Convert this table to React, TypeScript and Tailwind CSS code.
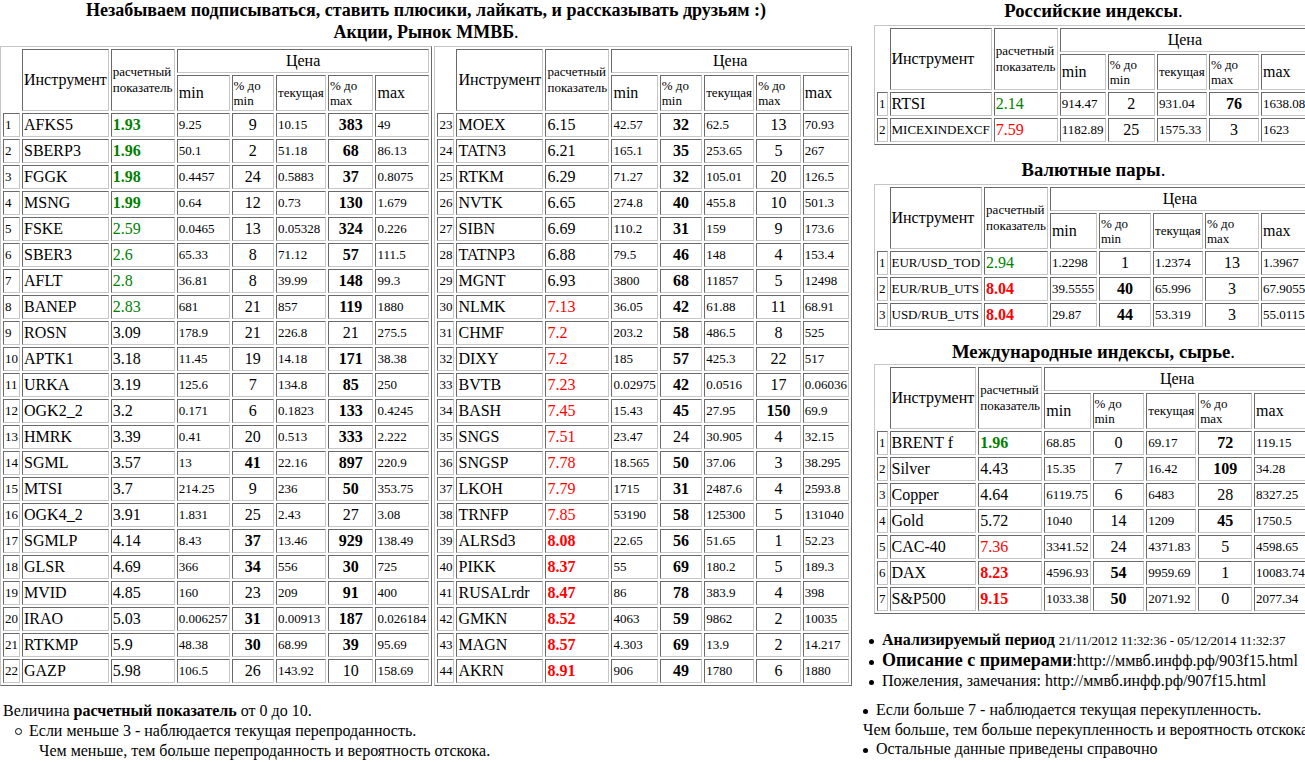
import React from 'react';

// ============================================================
// MMVB indicator tables — two stock tables plus index / FX / commodity blocks.
// ============================================================

type Row = [number, string, string, string, number, string, number, string];

const LEFT: Row[] = [
  [1, 'AFKS5', '1.93', '9.25', 9, '10.15', 383, '49'],
  [2, 'SBERP3', '1.96', '50.1', 2, '51.18', 68, '86.13'],
  [3, 'FGGK', '1.98', '0.4457', 24, '0.5883', 37, '0.8075'],
  [4, 'MSNG', '1.99', '0.64', 12, '0.73', 130, '1.679'],
  [5, 'FSKE', '2.59', '0.0465', 13, '0.05328', 324, '0.226'],
  [6, 'SBER3', '2.6', '65.33', 8, '71.12', 57, '111.5'],
  [7, 'AFLT', '2.8', '36.81', 8, '39.99', 148, '99.3'],
  [8, 'BANEP', '2.83', '681', 21, '857', 119, '1880'],
  [9, 'ROSN', '3.09', '178.9', 21, '226.8', 21, '275.5'],
  [10, 'APTK1', '3.18', '11.45', 19, '14.18', 171, '38.38'],
  [11, 'URKA', '3.19', '125.6', 7, '134.8', 85, '250'],
  [12, 'OGK2_2', '3.2', '0.171', 6, '0.1823', 133, '0.4245'],
  [13, 'HMRK', '3.39', '0.41', 20, '0.513', 333, '2.222'],
  [14, 'SGML', '3.57', '13', 41, '22.16', 897, '220.9'],
  [15, 'MTSI', '3.7', '214.25', 9, '236', 50, '353.75'],
  [16, 'OGK4_2', '3.91', '1.831', 25, '2.43', 27, '3.08'],
  [17, 'SGMLP', '4.14', '8.43', 37, '13.46', 929, '138.49'],
  [18, 'GLSR', '4.69', '366', 34, '556', 30, '725'],
  [19, 'MVID', '4.85', '160', 23, '209', 91, '400'],
  [20, 'IRAO', '5.03', '0.006257', 31, '0.00913', 187, '0.026184'],
  [21, 'RTKMP', '5.9', '48.38', 30, '68.99', 39, '95.69'],
  [22, 'GAZP', '5.98', '106.5', 26, '143.92', 10, '158.69'],
];

const RIGHT: Row[] = [
  [23, 'MOEX', '6.15', '42.57', 32, '62.5', 13, '70.93'],
  [24, 'TATN3', '6.21', '165.1', 35, '253.65', 5, '267'],
  [25, 'RTKM', '6.29', '71.27', 32, '105.01', 20, '126.5'],
  [26, 'NVTK', '6.65', '274.8', 40, '455.8', 10, '501.3'],
  [27, 'SIBN', '6.69', '110.2', 31, '159', 9, '173.6'],
  [28, 'TATNP3', '6.88', '79.5', 46, '148', 4, '153.4'],
  [29, 'MGNT', '6.93', '3800', 68, '11857', 5, '12498'],
  [30, 'NLMK', '7.13', '36.05', 42, '61.88', 11, '68.91'],
  [31, 'CHMF', '7.2', '203.2', 58, '486.5', 8, '525'],
  [32, 'DIXY', '7.2', '185', 57, '425.3', 22, '517'],
  [33, 'BVTB', '7.23', '0.02975', 42, '0.0516', 17, '0.06036'],
  [34, 'BASH', '7.45', '15.43', 45, '27.95', 150, '69.9'],
  [35, 'SNGS', '7.51', '23.47', 24, '30.905', 4, '32.15'],
  [36, 'SNGSP', '7.78', '18.565', 50, '37.06', 3, '38.295'],
  [37, 'LKOH', '7.79', '1715', 31, '2487.6', 4, '2593.8'],
  [38, 'TRNFP', '7.85', '53190', 58, '125300', 5, '131040'],
  [39, 'ALRSd3', '8.08', '22.65', 56, '51.65', 1, '52.23'],
  [40, 'PIKK', '8.37', '55', 69, '180.2', 5, '189.3'],
  [41, 'RUSALrdr', '8.47', '86', 78, '383.9', 4, '398'],
  [42, 'GMKN', '8.52', '4063', 59, '9862', 2, '10035'],
  [43, 'MAGN', '8.57', '4.303', 69, '13.9', 2, '14.217'],
  [44, 'AKRN', '8.91', '906', 49, '1780', 6, '1880'],
];

const RU: Row[] = [
  [1, 'RTSI', '2.14', '914.47', 2, '931.04', 76, '1638.08'],
  [2, 'MICEXINDEXCF', '7.59', '1182.89', 25, '1575.33', 3, '1623'],
];

const FX: Row[] = [
  [1, 'EUR/USD_TOD', '2.94', '1.2298', 1, '1.2374', 13, '1.3967'],
  [2, 'EUR/RUB_UTS', '8.04', '39.5555', 40, '65.996', 3, '67.9055'],
  [3, 'USD/RUB_UTS', '8.04', '29.87', 44, '53.319', 3, '55.0115'],
];

const WORLD: Row[] = [
  [1, 'BRENT f', '1.96', '68.85', 0, '69.17', 72, '119.15'],
  [2, 'Silver', '4.43', '15.35', 7, '16.42', 109, '34.28'],
  [3, 'Copper', '4.64', '6119.75', 6, '6483', 28, '8327.25'],
  [4, 'Gold', '5.72', '1040', 14, '1209', 45, '1750.5'],
  [5, 'CAC-40', '7.36', '3341.52', 24, '4371.83', 5, '4598.65'],
  [6, 'DAX', '8.23', '4596.93', 54, '9959.69', 1, '10083.74'],
  [7, 'S&P500', '9.15', '1033.38', 50, '2071.92', 0, '2077.34'],
];

// column widths (border-box) per table
const W_LEFT = ['w-[17px]', 'w-[86px]', 'w-[64px]', 'w-[52px]', 'w-[43px]', 'w-[50px]', 'w-[46px]', 'w-[54px]'];
const W_RIGHT = ['w-[17px]', 'w-[87px]', 'w-[64px]', 'w-[46px]', 'w-[43px]', 'w-[50px]', 'w-[45px]', 'w-[46px]'];
const W_RU = ['w-[10px]', 'w-[101px]', 'w-[64px]', 'w-[46px]', 'w-[48px]', 'w-[50px]', 'w-[51px]', 'w-[49px]'];
const W_FX = ['w-[10px]', 'w-[92px]', 'w-[63px]', 'w-[47px]', 'w-[53px]', 'w-[50px]', 'w-[55px]', 'w-[49px]'];
const W_WORLD = ['w-[10px]', 'w-[86px]', 'w-[64px]', 'w-[46px]', 'w-[53px]', 'w-[49px]', 'w-[55px]', 'w-[56px]'];

const CELL =
  'p-[1px] border border-solid border-t-[#6a6a6a] border-l-[#6a6a6a] border-b-[#c6c6c6] border-r-[#c6c6c6]';

function calcClass(v: string) {
  const n = parseFloat(v);
  if (n < 2) return 'text-[#008000] font-bold';
  if (n < 3) return 'text-[#008000]';
  if (n > 8) return 'text-[#ff0000] font-bold';
  if (n > 7) return 'text-[#ff0000]';
  return '';
}

function DataTable({ rows, w }: { rows: Row[]; w: string[] }) {
  return (
    <table className="border-separate border-spacing-[2px] border border-solid border-t-[#c6c6c6] border-l-[#c6c6c6] border-b-[#6a6a6a] border-r-[#6a6a6a] leading-[18px]">
      <tbody>
        <tr className="h-[24px]">
          <td rowSpan={2} className={`p-0 ${w[0]}`} />
          <td rowSpan={2} className={`${CELL} ${w[1]} text-[16px]`}>
            Инструмент
          </td>
          <td rowSpan={2} className={`${CELL} ${w[2]} text-[13px] leading-[16px]`}>
            расчетный
            <br />
            показатель
          </td>
          <td colSpan={5} className={`${CELL} text-center text-[16px]`}>
            Цена
          </td>
        </tr>
        <tr className="h-[36px]">
          <td className={`${CELL} ${w[3]} text-[16px]`}>min</td>
          <td className={`${CELL} ${w[4]} text-[13px] leading-[15px]`}>
            % до
            <br />
            min
          </td>
          <td className={`${CELL} ${w[5]} text-[13px]`}>текущая</td>
          <td className={`${CELL} ${w[6]} text-[13px] leading-[15px]`}>
            % до
            <br />
            max
          </td>
          <td className={`${CELL} ${w[7]} text-[16px]`}>max</td>
        </tr>
        {rows.map((r) => (
          <tr key={r[0]} className="h-[24px]">
            <td className={`${CELL} text-[13px]`}>{r[0]}</td>
            <td className={`${CELL} whitespace-nowrap ${r[1].length > 9 ? 'text-[13px]' : 'text-[16px]'}`}>{r[1]}</td>
            <td className={`${CELL} text-[16px] ${calcClass(r[2])}`}>{r[2]}</td>
            <td className={`${CELL} text-[13px]`}>{r[3]}</td>
            <td className={`${CELL} text-center text-[16px] ${r[4] >= 30 ? 'font-bold' : ''}`}>{r[4]}</td>
            <td className={`${CELL} text-[13px]`}>{r[5]}</td>
            <td className={`${CELL} text-center text-[16px] ${r[6] >= 30 ? 'font-bold' : ''}`}>{r[6]}</td>
            <td className={`${CELL} text-[13px]`}>{r[7]}</td>
          </tr>
        ))}
      </tbody>
    </table>
  );
}

function Heading({ children, className = '' }: { children: React.ReactNode; className?: string }) {
  return (
    <div className={`text-center text-[18.7px] leading-[22px] ${className}`}>
      <b>{children}</b>.
    </div>
  );
}

const Dot = () => <span className="mr-[8px] inline-block h-[5px] w-[5px] rounded-full bg-black align-middle" />;

export default function App() {
  return (
    <div className="relative h-[762px] w-[1305px] overflow-hidden bg-white font-['Liberation_Serif',serif] text-black">
      <div className="flex h-[691px] items-start">
        {/* stocks */}
        <div className="w-[852px] shrink-0">
          <div className="text-center text-[18px] font-bold leading-[20px]">
            Незабываем подписываться, ставить плюсики, лайкать, и рассказывать друзьям :)
          </div>
          <div className="mt-[2px] text-center text-[18px] leading-[20px]">
            <b>Акции, Рынок ММВБ</b>.
          </div>
          <div className="mt-[4px] flex gap-[2px]">
            <DataTable rows={LEFT} w={W_LEFT} />
            <DataTable rows={RIGHT} w={W_RIGHT} />
          </div>
        </div>

        {/* indices */}
        <div className="ml-[22px] w-[439px] shrink-0">
          <Heading>Российские индексы</Heading>
          <div className="mt-[3px]">
            <DataTable rows={RU} w={W_RU} />
          </div>
          <Heading className="mt-[14px]">Валютные пары</Heading>
          <div className="mt-[3px]">
            <DataTable rows={FX} w={W_FX} />
          </div>
          <Heading className="mt-[11px]">Международные индексы, сырье</Heading>
          <div className="mt-[1px]">
            <DataTable rows={WORLD} w={W_WORLD} />
          </div>
          <div className="ml-[-5px] mt-[16px] whitespace-nowrap">
            <div className="h-[20px] leading-[20px]">
              <Dot />
              <b className="text-[16px]">Анализируемый период</b>{' '}
              <span className="text-[13px]">21/11/2012 11:32:36 - 05/12/2014 11:32:37</span>
            </div>
            <div className="h-[21px] leading-[21px]">
              <Dot />
              <b className="text-[18px]">Описание с примерами</b>
              <span className="text-[16px]">:http://ммвб.инфф.рф/903f15.html</span>
            </div>
            <div className="h-[20px] text-[16px] leading-[20px]">
              <Dot />
              Пожеления, замечания: http://ммвб.инфф.рф/907f15.html
            </div>
          </div>
        </div>
      </div>

      {/* legend */}
      <div className="mt-[9px] flex whitespace-nowrap text-[16px]">
        <div className="w-[863px] shrink-0 pl-[3px]">
          <div className="leading-[21px]">
            Величина <b>расчетный показатель</b> от 0 до 10.
          </div>
          <div className="flex items-center pl-[12px] leading-[20px]">
            <span className="mr-[7px] inline-block h-[7px] w-[7px] rounded-full border border-black" />
            Если меньше 3 - наблюдается текущая перепроданность.
          </div>
          <div className="pl-[36px] leading-[19px]">Чем меньше, тем больше перепроданность и вероятность отскока.</div>
        </div>
        <div className="shrink-0">
          <div className="leading-[20px]">
            <Dot />
            Если больше 7 - наблюдается текущая перекупленность.
          </div>
          <div className="leading-[19px]">Чем больше, тем больше перекупленность и вероятность отскока.</div>
          <div className="leading-[19px]">
            <Dot />
            Остальные данные приведены справочно
          </div>
        </div>
      </div>
    </div>
  );
}
